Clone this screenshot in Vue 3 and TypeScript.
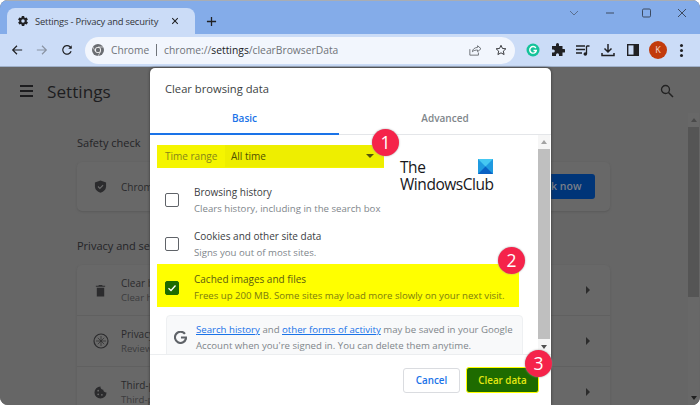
<script setup lang="ts">
interface SettingsRow {
  title: string
  sub: string
  icon: 'trash' | 'compass' | 'cookie'
}

interface ClearOption {
  title: string
  sub: string
  checked: boolean
}

// the dialog hides everything past the first word or so of these rows
const settingsRows: SettingsRow[] = [
  { title: 'Clear browsing', sub: 'Clear history', icon: 'trash' },
  { title: 'Privacy Guide', sub: 'Review key', icon: 'compass' },
  { title: 'Third-party', sub: 'Third-party', icon: 'cookie' },
]

const clearOptions: ClearOption[] = [
  { title: 'Browsing history', sub: 'Clears history, including in the search box', checked: false },
  { title: 'Cookies and other site data', sub: 'Signs you out of most sites.', checked: false },
  { title: 'Cached images and files', sub: 'Frees up 200 MB. Some sites may load more slowly on your next visit.', checked: true },
]
</script>

<template>
  <div class="window">
    <div class="tabstrip">
      <div class="tab">
        <svg class="tab-gear" viewBox="0 0 24 24"><path fill="#202124" d="M19.4 13a7.500 7.500 0 0 0 0-2l2.100-1.600a.5.5 0 0 0 .1-.6l-2-3.500a.5.5 0 0 0-.6-.2l-2.500 1a7.300 7.300 0 0 0-1.700-1L14.400 2.400A.5.5 0 0 0 14 2h-4a.5.5 0 0 0-.5.4l-.4 2.700a7.300 7.300 0 0 0-1.700 1l-2.500-1a.5.5 0 0 0-.6.2l-2 3.500a.5.5 0 0 0 .1.600L4.600 11a7.500 7.500 0 0 0 0 2l-2.100 1.600a.5.5 0 0 0-.1.6l2 3.500a.5.5 0 0 0 .6.2l2.500-1a7.300 7.300 0 0 0 1.700 1l.4 2.700a.5.5 0 0 0 .5.4h4a.5.5 0 0 0 .5-.4l.4-2.700a7.300 7.300 0 0 0 1.700-1l2.500 1a.5.5 0 0 0 .6-.2l2-3.500a.5.5 0 0 0-.1-.6zM12 15.500a3.500 3.500 0 1 1 0-7 3.500 3.500 0 0 1 0 7z"/></svg>
        <span class="tab-title">Settings - Privacy and security</span>
        <svg class="tab-close" viewBox="0 0 10 10"><path d="M1.500 1.500l7 7M8.500 1.500l-7 7" stroke="#202124" stroke-width="1.300" fill="none"/></svg>
      </div>
      <svg class="new-tab" viewBox="0 0 12 12"><path d="M6 1v10M1 6h10" stroke="#202124" stroke-width="1.400" fill="none"/></svg>
      <div class="win-controls">
        <svg viewBox="0 0 12 12" class="ctl chevron"><path d="M2 4l4 4 4-4" stroke="#5a6f8f" fill="none"/></svg>
        <svg viewBox="0 0 12 12" class="ctl"><path d="M2 6h8" stroke="#3c4a60" fill="none"/></svg>
        <svg viewBox="0 0 12 12" class="ctl"><rect x="2.500" y="2" width="8" height="8" rx="1.200" stroke="#3c4a60" fill="none"/></svg>
        <svg viewBox="0 0 12 12" class="ctl"><path d="M2 2l8 8M10 2l-8 8" stroke="#3c4a60" fill="none"/></svg>
      </div>
    </div>

    <div class="toolbar">
      <svg class="nav" viewBox="0 0 14 14"><path d="M13 7H2M7 2L2 7l5 5" stroke="#202124" stroke-width="1.400" fill="none"/></svg>
      <svg class="nav" viewBox="0 0 14 14"><path d="M1 7h11M7 2l5 5-5 5" stroke="#8a93a3" stroke-width="1.400" fill="none"/></svg>
      <svg class="nav" viewBox="0 0 14 14"><path d="M11.800 8.500A5 5 0 1 1 10.500 3.200L12 4.700" stroke="#202124" stroke-width="1.400" fill="none"/><path d="M12.500 1.500v4h-4z" fill="#202124"/></svg>
      <div class="omnibox">
        <svg class="chrome-icon" viewBox="0 0 12 12"><circle cx="6" cy="6" r="6" fill="#6a6d72"/><circle cx="6" cy="6" r="3" fill="#fff"/><circle cx="6" cy="6" r="2.200" fill="#6a6d72"/><path d="M6 3h5.400M3.400 7.500L.8 3M8.600 7.500L6 12" stroke="#fff" stroke-width=".6"/></svg>
        <span class="origin">Chrome</span>
        <span class="pipe"></span>
        <span class="url">chrome://<b>settings</b>/clearBrowserData</span>
        <svg class="omni-icon share" viewBox="0 0 14 14"><path d="M1 6v7h10v-3" stroke="#5f6368" fill="none"/><path d="M4 9c0-3 3-5 6-5V2l4 3.500L10 9V7C8 7 5.500 7.500 4 9z" stroke="#5f6368" fill="none"/></svg>
        <svg class="omni-icon star" viewBox="0 0 14 14"><path d="M7 1.500l1.700 3.700 4 .4-3 2.700.9 4L7 10.300l-3.600 2 .9-4-3-2.700 4-.4z" stroke="#303134" stroke-width="1.100" fill="none"/></svg>
      </div>
      <div class="extensions">
        <span class="ext">
          <svg viewBox="0 0 14 14"><circle cx="7" cy="7" r="6.500" fill="#15c39a"/><path d="M9.800 5A3.300 3.300 0 1 0 10.300 7.500H7.500" stroke="#fff" stroke-width="1.400" fill="none"/></svg>
        </span>
        <span class="ext">
          <svg viewBox="0 0 14 14"><path fill="#202124" d="M5 1.500a1.500 1.500 0 0 1 3 0V3h3.500v3H13a1.700 1.700 0 0 1 0 3.400h-1.500V13H8v-1.300a1.500 1.500 0 0 0-3 0V13H1V9.500h1.300a1.500 1.500 0 0 0 0-3H1V3h4z"/></svg>
        </span>
        <span class="ext">
          <svg viewBox="0 0 14 14"><path d="M0 3h9M0 6.500h9M0 10h6" stroke="#202124" stroke-width="1.300"/><path d="M10.500 3v8" stroke="#202124" stroke-width="1.300"/><path d="M10.500 3h3" stroke="#202124" stroke-width="1.300"/><circle cx="9.300" cy="11" r="1.800" fill="#202124"/></svg>
        </span>
        <span class="ext">
          <svg viewBox="0 0 14 14"><path d="M7 1v8M3.500 5.500L7 9l3.500-3.500" stroke="#202124" stroke-width="1.500" fill="none"/><path d="M1 10v2.500h12V10" stroke="#202124" stroke-width="1.500" fill="none"/></svg>
        </span>
        <span class="ext">
          <svg viewBox="0 0 14 14"><rect x="1.700" y="1.700" width="10.600" height="10.600" stroke="#202124" stroke-width="1.400" fill="none"/><rect x="7.500" y="2" width="5" height="10" fill="#202124"/></svg>
        </span>
        <span class="avatar">K</span>
        <span class="dots"><i></i><i></i><i></i></span>
      </div>
    </div>

    <main class="page">
      <header class="page-head">
        <span class="hamburger"><i></i><i></i><i></i></span>
        <h1>Settings</h1>
        <svg class="search" viewBox="0 0 14 14"><circle cx="5.500" cy="5.500" r="4" stroke="#222" stroke-width="1.300" fill="none"/><path d="M8.500 8.500l4.500 4.500" stroke="#222" stroke-width="1.500"/></svg>
      </header>

      <section class="content">
        <h2>Safety check</h2>
        <div class="card safety">
          <svg class="row-icon" viewBox="0 0 14 14"><path d="M7 .5l6 2.200v4C13 10 10.500 12.700 7 13.700 3.500 12.700 1 10 1 6.700v-4z" fill="#2b2b2d"/><path d="M4.300 7l2 2 3.500-3.600" stroke="#6b6b6b" stroke-width="1.200" fill="none"/></svg>
          <span class="row-title">Chrome</span>
          <span class="check-btn">Check now</span>
        </div>
        <h2 class="second">Privacy and security</h2>
        <div class="card">
          <div v-for="row in settingsRows" :key="row.title" class="settings-row">
            <svg v-if="row.icon === 'trash'" class="row-icon" viewBox="0 0 14 14"><path d="M3 4h8v9.500H3zM2 2h10v1H2zM5 1h4v1H5z" fill="#2b2b2d"/></svg>
            <svg v-else-if="row.icon === 'compass'" class="row-icon large" viewBox="0 0 16 16"><circle cx="8" cy="8" r="7" stroke="#2b2b2d" stroke-width="1.200" fill="none"/><path d="M8 3v10M3 8h10M4.800 4.800l6.400 6.400M11.200 4.800l-6.400 6.400" stroke="#2b2b2d" stroke-width=".7"/></svg>
            <svg v-else class="row-icon" viewBox="0 0 14 14"><path d="M7 .5a6.500 6.500 0 1 0 6.500 6.500A3 3 0 0 1 10 4 3 3 0 0 1 7 .5z" fill="#2b2b2d"/><circle cx="4.500" cy="5" r="1" fill="#666"/><circle cx="4.500" cy="9" r="1" fill="#666"/><circle cx="8.500" cy="9.500" r="1" fill="#666"/></svg>
            <div class="row-text">
              <span class="row-title">{{ row.title }}</span>
              <span class="row-sub">{{ row.sub }}</span>
            </div>
            <span class="row-arrow"></span>
          </div>
        </div>
      </section>

      <div class="page-scroll">
        <span class="arrow-up dim"></span>
        <span class="thumb"></span>
        <span class="arrow-down dark"></span>
      </div>
    </main>

    <div class="dialog">
      <div class="dialog-title">Clear browsing data</div>
      <div class="tabs">
        <div class="dlg-tab active">Basic</div>
        <div class="dlg-tab">Advanced</div>
      </div>
      <div class="dlg-middle">
        <div class="dlg-body">
          <div class="range-row">
            <span class="range-label">Time range</span>
            <span class="range-select">All time<i class="caret"></i></span>
          </div>
          <div class="logo">
            <div class="logo-top">
              <span>The</span>
              <svg class="win-logo" viewBox="0 0 15 15"><rect width="15" height="15" fill="#1f9ae0"/><path d="M0 0h15L7.500 7.500z" fill="#45c8f2"/><path d="M0 15h15L7.500 7.500z" fill="#0a62c4"/></svg>
            </div>
            <div>WindowsClub</div>
          </div>
          <div
            v-for="opt in clearOptions"
            :key="opt.title"
            class="option"
            :class="{ marked: opt.checked }"
          >
            <span class="box" :class="{ checked: opt.checked }">
              <svg v-if="opt.checked" viewBox="0 0 12 12"><path d="M2.500 6.200l2.500 2.300 4.500-5" stroke="#fff" stroke-width="1.300" fill="none"/></svg>
            </span>
            <div class="option-text">
              <span class="opt-title">{{ opt.title }}</span>
              <span class="opt-sub">{{ opt.sub }}</span>
            </div>
          </div>
          <div class="account-note">
            <svg class="g-icon" viewBox="0 0 14 14"><path d="M11.800 3.200A6 6 0 1 0 12.800 8.500V7H7.500" stroke="#5f6368" stroke-width="2.300" fill="none"/></svg>
            <p>
              <a>Search history</a> and <a>other forms of activity</a> may be saved in your Google<br>
              Account when you're signed in. You can delete them anytime.
            </p>
          </div>
        </div>
        <div class="dlg-scroll">
          <span class="arrow-up"></span>
          <span class="dlg-thumb"></span>
          <span class="arrow-down"></span>
        </div>
      </div>
      <div class="dlg-footer">
        <button class="btn-cancel" type="button">Cancel</button>
        <button class="btn-clear" type="button">Clear data</button>
      </div>
    </div>

    <span class="badge b1">1</span>
    <span class="badge b2">2</span>
    <span class="badge b3">3</span>
  </div>
</template>

<style>
html, body {
  margin: 0;
  background: #fff;
  overflow: hidden;
}
</style>

<style scoped>
.window {
  position: relative;
  width: 700px;
  height: 405px;
  overflow: hidden;
  display: flex;
  flex-direction: column;
  border-radius: 8px;
  font-family: "Open Sans", "Noto Sans", sans-serif;
  background: #666;
}

.tabstrip {
  height: 34px;
  flex: none;
  display: flex;
  align-items: flex-end;
  padding-left: 7px;
  background: #84ace9;
  border-top: 1px solid #a9adb3;
  box-sizing: border-box;
}

.tab {
  width: 188px;
  height: 26px;
  display: flex;
  align-items: center;
  box-sizing: border-box;
  padding: 0 9px 0 10px;
  background: #cbdcf7;
  border-radius: 8px 8px 0 0;
}

.tab-gear {
  width: 12px;
  height: 12px;
  margin-right: 6px;
  flex: none;
}

.tab-title {
  font-size: 9.400px;
  letter-spacing: -0.200px;
  color: #33363b;
  white-space: nowrap;
  flex: 1;
}

.tab-close {
  width: 8px;
  height: 8px;
  flex: none;
  margin-right: 7px;
}

.new-tab {
  width: 11px;
  height: 11px;
  margin: 0 0 7px 11px;
}

.win-controls {
  margin-left: auto;
  display: flex;
  gap: 24px;
  align-self: flex-start;
  padding: 6px 12px 0 0;
}

.ctl {
  width: 12px;
  height: 12px;
}

.toolbar {
  height: 33px;
  flex: none;
  display: flex;
  align-items: center;
  padding-left: 11px;
  gap: 13px;
  background: #cbdcf7;
  border-bottom: 1px solid #9fb0c9;
  box-sizing: border-box;
}

.nav {
  width: 12px;
  height: 12px;
  flex: none;
}

.omnibox {
  width: 430px;
  height: 27px;
  margin-left: -1px;
  flex: none;
  display: flex;
  align-items: center;
  padding: 0 8px 0 7px;
  box-sizing: border-box;
  background: #f2f6fd;
  border-radius: 14px;
}

.chrome-icon {
  width: 12px;
  height: 12px;
  margin-right: 7px;
}

.origin {
  font-size: 10.200px;
  color: #6f7378;
}

.pipe {
  width: 1px;
  height: 12px;
  margin: 0 7px;
  background: #70747a;
}

.url {
  font-size: 10.300px;
  color: #6f7378;
  flex: 1;
  white-space: nowrap;
}

.url b {
  font-weight: 400;
  color: #202124;
}

.omni-icon {
  width: 12px;
  height: 12px;
}

.share {
  margin-right: 14px;
}

.extensions {
  display: flex;
  align-items: center;
  gap: 11px;
  margin-left: -2px;
}

.ext {
  width: 14px;
  height: 14px;
  display: flex;
}

.ext svg {
  width: 100%;
  height: 100%;
}

.avatar {
  width: 18px;
  height: 18px;
  margin-left: -2px;
  border-radius: 50%;
  background: #c23b0c;
  color: #f5d9cc;
  font-size: 9px;
  text-align: center;
  line-height: 18px;
}

.dots {
  display: flex;
  flex-direction: column;
  gap: 2px;
  margin-left: 2px;
}

.dots i {
  width: 3px;
  height: 3px;
  border-radius: 50%;
  background: #202124;
}

.page {
  flex: 1;
  position: relative;
  min-height: 0;
  overflow: hidden;
  background: #666;
  color: #1d1d1f;
}

.page-head {
  height: 48px;
  display: flex;
  align-items: center;
  padding: 0 20px;
}

.hamburger {
  display: flex;
  flex-direction: column;
  gap: 3px;
  margin-right: 14px;
}

.hamburger i {
  width: 13px;
  height: 2px;
  background: #1d1d1f;
}

h1 {
  margin: 0;
  font-size: 17.200px;
  font-weight: 400;
}

.search {
  width: 14px;
  height: 14px;
  margin-left: auto;
  margin-right: 6px;
}

.content {
  width: 533px;
  margin: 19px 0 0 77px;
}

h2 {
  margin: 0 0 11px;
  font-size: 11px;
  line-height: 17px;
  font-weight: 400;
  color: #242426;
}

h2.second {
  margin-top: 26px;
}

.card {
  background: #686868;
  border-radius: 5px;
  box-shadow: 0 1px 2px #5a5a5a;
}

.safety {
  height: 49px;
  display: flex;
  align-items: center;
  padding: 0 15px 0 17px;
}

.row-icon {
  width: 13px;
  height: 13px;
  flex: none;
  margin-right: 14px;
}

.row-icon.large {
  width: 16px;
  height: 16px;
  margin-left: -1px;
  margin-right: 12px;
}

.row-title {
  font-size: 10px;
  color: #2a2a2c;
  white-space: nowrap;
}

.check-btn {
  margin-left: auto;
  width: 82px;
  height: 25px;
  line-height: 25px;
  text-align: center;
  font-size: 10.500px;
  font-weight: 600;
  color: #7a7f88;
  background: #003578;
  border-radius: 3px;
}

.settings-row {
  height: 51px;
  display: flex;
  align-items: center;
  padding: 0 20px 0 17px;
  box-sizing: border-box;
  border-bottom: 1px solid #606060;
}

.row-text {
  display: flex;
  flex-direction: column;
  gap: 1px;
}

.row-sub {
  font-size: 9.600px;
  color: #3c3c3e;
  white-space: nowrap;
}

.row-arrow {
  margin-left: auto;
  width: 0;
  height: 0;
  border-left: 4px solid #2b2b2b;
  border-top: 4px solid transparent;
  border-bottom: 4px solid transparent;
}

.page-scroll {
  position: absolute;
  top: 46px;
  right: 1px;
  bottom: 0;
  width: 11px;
  display: flex;
  flex-direction: column;
  align-items: center;
  background: #686868;
}

.thumb {
  width: 100%;
  height: 170px;
  margin-top: 5px;
  background: #555;
}

.arrow-up,
.arrow-down {
  width: 0;
  height: 0;
  border-left: 3.500px solid transparent;
  border-right: 3.500px solid transparent;
}

.arrow-up {
  margin-top: 5px;
  border-bottom: 4px solid #a3a3a3;
}

.arrow-up.dim {
  border-bottom-color: #4a4a4a;
}

.arrow-down {
  margin-top: auto;
  margin-bottom: 5px;
  border-top: 4px solid #505050;
}

.arrow-down.dark {
  border-top-color: #202020;
}

.dialog {
  position: absolute;
  left: 150px;
  top: 68px;
  width: 401px;
  height: 337px;
  display: flex;
  flex-direction: column;
  background: #fff;
  border-radius: 5px 5px 0 0;
  box-shadow: 0 0 3px #333;
}

.dialog-title {
  height: 41px;
  padding: 11px 0 0 15px;
  box-sizing: border-box;
  font-size: 11.200px;
  line-height: 20px;
  color: #3c3f43;
}

.tabs {
  height: 25px;
  display: flex;
  border-bottom: 1px solid #e4e6e9;
}

.dlg-tab {
  flex: none;
  width: 189px;
  font-size: 10px;
  font-weight: 600;
  text-align: center;
  line-height: 18px;
  color: #80868b;
}

.dlg-tab:last-child {
  width: 212px;
}

.dlg-tab.active {
  color: #1a73e8;
  border-bottom: 2px solid #1a73e8;
  height: 24px;
}

.dlg-middle {
  flex: 1;
  min-height: 0;
  display: flex;
  overflow: hidden;
}

.dlg-body {
  position: relative;
  flex: 1;
  min-width: 0;
  padding: 10px 0 0 7px;
}

.range-row {
  width: 227px;
  height: 23px;
  display: flex;
  align-items: stretch;
  background: #f5f500;
  font-size: 10px;
  color: #85871a;
}

.range-label {
  width: 68px;
  padding-left: 8px;
  box-sizing: border-box;
  line-height: 23px;
}

.range-select {
  flex: 1;
  display: flex;
  align-items: center;
  justify-content: space-between;
  padding: 0 10px 0 6px;
  margin-bottom: 1px;
  background: #eeee00;
  color: #4f5000;
}

.caret {
  width: 0;
  height: 0;
  border-left: 4px solid transparent;
  border-right: 4px solid transparent;
  border-top: 4px solid #55550a;
}

.logo {
  position: absolute;
  left: 250px;
  top: 24px;
  width: 93px;
  font-size: 15.500px;
  line-height: 17px;
  color: #17171b;
  letter-spacing: -0.450px;
}

.logo-top {
  display: flex;
  justify-content: space-between;
}

.win-logo {
  width: 15px;
  height: 15px;
}

.option {
  display: flex;
  align-items: center;
  height: 44px;
  width: 362px;
  box-sizing: border-box;
  padding-left: 8px;
}

.range-row + .logo + .option {
  margin-top: 10px;
}

.option.marked {
  margin-top: -2px;
  height: 43px;
  padding-top: 4px;
  background: #ffff00;
}

.box {
  width: 12px;
  height: 12px;
  flex: none;
  margin-right: 15px;
  border: 1px solid #5f6368;
  border-radius: 2px;
  display: flex;
  align-items: center;
  justify-content: center;
}

.box.checked {
  background: #1e6b00;
  border-color: #1e6b00;
}

.box svg {
  width: 12px;
  height: 12px;
}

.option-text {
  display: flex;
  flex-direction: column;
  gap: 1px;
  white-space: nowrap;
}

.opt-title {
  font-size: 10px;
  line-height: 15px;
  color: #3c4043;
}

.opt-sub {
  font-size: 9.650px;
  line-height: 15px;
  color: #80868b;
}

.marked .opt-title {
  color: #5a5b10;
}

.marked .opt-sub {
  color: #7b7c10;
}

.account-note {
  width: 357px;
  height: 60px;
  margin: 8px 0 0 9px;
  display: flex;
  box-sizing: border-box;
  padding: 6px 5px 0 7px;
  background: #f8f9fa;
  border-radius: 4px;
  border: 1px solid #eef0f2;
}

.g-icon {
  width: 13px;
  height: 13px;
  flex: none;
  margin: 9px 9px 0 0;
}

.account-note p {
  margin: 0;
  font-size: 9.650px;
  line-height: 15.500px;
  color: #80868b;
  white-space: nowrap;
}

.account-note a {
  color: #1a73e8;
  text-decoration: underline;
}

.dlg-scroll {
  width: 12px;
  flex: none;
  display: flex;
  flex-direction: column;
  align-items: center;
  margin-right: 1px;
  background: #f6f6f6;
}

.dlg-thumb {
  width: 100%;
  height: 190px;
  margin-top: 5px;
  background: #bfbfbf;
}

.dlg-footer {
  height: 51px;
  flex: none;
  display: flex;
  justify-content: flex-end;
  align-items: center;
  gap: 6px;
  padding: 0 12px 0 0;
  box-sizing: border-box;
  border-top: 1px solid #eceef0;
  position: relative;
  background: #fff;
}

.btn-cancel,
.btn-clear {
  font-family: inherit;
  font-size: 9.800px;
  font-weight: 600;
  border-radius: 3px;
  padding: 0;
}

.btn-cancel {
  width: 57px;
  height: 25px;
  background: #fff;
  color: #1a73e8;
  border: 1px solid #dadce0;
}

.btn-clear {
  width: 73px;
  height: 26px;
  background: #1e6b00;
  color: #e5e812;
  border: 1px solid #ffff00;
}

.badge {
  position: absolute;
  width: 27px;
  height: 27px;
  border-radius: 50%;
  background: #f5234a;
  color: #fff;
  font-size: 17.500px;
  line-height: 27px;
  text-align: center;
  box-shadow: 0 0 2px #9a9a9a;
}

.b1 { left: 372px; top: 129px; }
.b2 { left: 498px; top: 247px; }
.b3 { left: 525px; top: 350px; }
</style>
